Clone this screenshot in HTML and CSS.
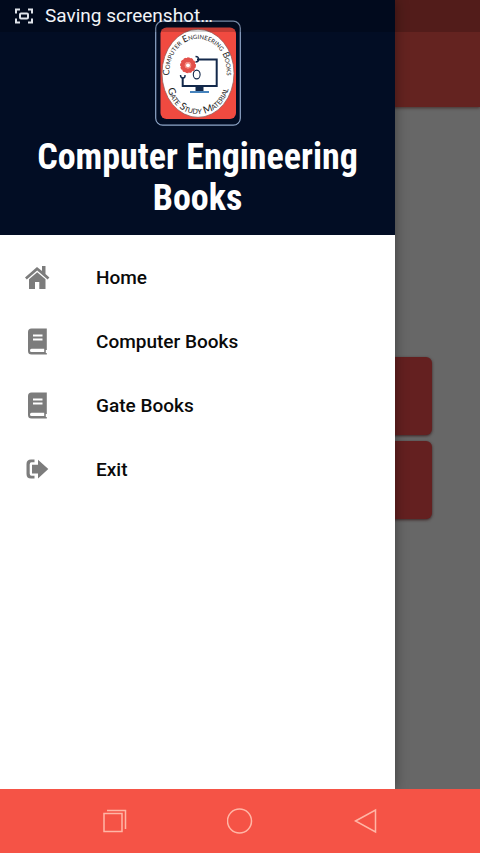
FILE: index.html
```html
<!DOCTYPE html>
<html lang="en">
<head>
<meta charset="utf-8">
<meta name="viewport" content="width=device-width, initial-scale=1">
<title>Computer Engineering Books</title>
<link rel="stylesheet" href="styles.css">
</head>
<body>
<div class="screen">
  <div class="app">
    <div class="toolbar"></div>
    <main class="cards">
      <div class="card"></div>
      <div class="card"></div>
    </main>
  </div>
  <aside class="drawer">
    <header class="drawer-header">
      <svg class="logo" viewBox="0 0 86 106" aria-hidden="true">
        <rect x="0.7" y="1.2" width="84.6" height="104" rx="7" fill="#020d24" stroke="#8fa6c8" stroke-width="1.2"/>
        <rect x="5.500" y="7.500" width="75.500" height="91.500" rx="6" fill="#f04a40"/>
        <ellipse cx="43" cy="53.300" rx="36" ry="44" fill="#fff" stroke="#8c5550" stroke-width="0.7"/>
        <path id="arc-top" d="M15 62C11 36 25 19 43 19S75 36 71 62" fill="none"/>
        <path id="arc-bottom" d="M11 60C13 82 26 94 43 94S73 82 75 60" fill="none"/>
        <text class="logo-top"><textPath href="#arc-top" startOffset="50%">Computer Engineering Books</textPath></text>
        <text class="logo-bottom"><textPath href="#arc-bottom" startOffset="50%">Gate Study Material</textPath></text>
        <path d="M42 39.500H61.700V66H27.700V58" fill="none" stroke="#13294b" stroke-width="2"/>
        <path d="M40.500 36.500Q44 36.500 43.500 39.500Q43.500 42 40.500 42M25.500 55Q25.500 58 28 58Q30.300 58 30 55" fill="none" stroke="#13294b" stroke-width="1.400"/>
        <circle cx="33" cy="45.300" r="5.200" fill="#fff" stroke="#e3504a" stroke-width="4.500"/>
        <circle cx="33" cy="45.300" r="7.300" fill="none" stroke="#e3504a" stroke-width="1.200" stroke-dasharray="2.500 1.200"/>
        <circle cx="33" cy="45.300" r="3.300" fill="#f58b80"/>
        <circle cx="33" cy="45.300" r="1.900" fill="#fff"/>
        <ellipse cx="41.700" cy="54.500" rx="3.400" ry="4.400" fill="#fff" stroke="#13294b" stroke-width="1.100"/>
        <path d="M40.500 67H48.500V71H40.500Z" fill="#13294b"/>
        <path d="M35 72H54" stroke="#4683bd" stroke-width="2"/>
      </svg>
      <h1 class="title">Computer Engineering Books</h1>
    </header>
    <nav class="menu">
      <a class="item" href="#home">
        <svg class="icon" viewBox="0 0 24 24" aria-hidden="true"><path d="M12 1L0 11.500L1.800 13.500L12.200 4.500L22.600 13.500L24.400 11.500L20.500 8V0H17V5Z"/><path d="M12.200 6.200L4 13.300V23H10V16H14.300V23H20.500V13.300Z"/></svg>
        <span>Home</span>
      </a>
      <a class="item" href="#computer-books">
        <svg class="icon" viewBox="0 0 24 24" aria-hidden="true"><path fill-rule="evenodd" d="M6.500 -1.500H21.800V20H20.800V23H21.800V24.500H6.500Q3 24.500 3 21V2Q3 -1.500 6.500 -1.500ZM8 4.500V6.500H17.500V4.500ZM8 8.500V10.500H17.500V8.500ZM6.500 18.800Q5 18.800 5 20.400T6.500 22H19.200V18.800Z"/></svg>
        <span>Computer Books</span>
      </a>
      <a class="item" href="#gate-books">
        <svg class="icon" viewBox="0 0 24 24" aria-hidden="true"><path fill-rule="evenodd" d="M6.500 -1.500H21.800V20H20.800V23H21.800V24.500H6.500Q3 24.500 3 21V2Q3 -1.500 6.500 -1.500ZM8 4.500V6.500H17.500V4.500ZM8 8.500V10.500H17.500V8.500ZM6.500 18.800Q5 18.800 5 20.400T6.500 22H19.200V18.800Z"/></svg>
        <span>Gate Books</span>
      </a>
      <a class="item" href="#exit">
        <svg class="icon" viewBox="0 0 24 24" aria-hidden="true"><path d="M9.500 1.500H6Q1.500 1.500 1.500 6V16Q1.500 20.500 6 20.500H9.500V17.800H6.500Q4.700 17.800 4.700 15.500V6.500Q4.700 4.200 6.500 4.200H9.500Z"/><path d="M13 1.800L23.300 11L13 20.500V15.500H7V6.800H13Z"/></svg>
        <span>Exit</span>
      </a>
    </nav>
  </aside>
  <div class="status">
    <svg class="status-icon" viewBox="0 0 18 16" aria-hidden="true"><path d="M1 5.500V1.500H5M13 1.500H17V5.500M17 10.500V14.500H13M5 14.500H1V10.500" fill="none" stroke="#dfe3ea" stroke-width="2"/><rect x="5" y="5.500" width="8" height="5" rx="1" fill="none" stroke="#dfe3ea" stroke-width="2"/></svg>
    <span>Saving screenshot…</span>
  </div>
</div>
<footer class="navbar">
  <button class="key" type="button" aria-label="Recent apps"><svg viewBox="0 0 26 26"><path d="M3 5.500H21V23.500H3ZM6 2.500H24.500V21"/></svg></button>
  <button class="key" type="button" aria-label="Home screen"><svg viewBox="0 0 26 26"><circle cx="12.500" cy="13" r="12"/></svg></button>
  <button class="key" type="button" aria-label="Back"><svg viewBox="0 0 26 26"><path d="M1.500 13L21.500 2V24Z"/></svg></button>
</footer>
</body>
</html>
```
FILE: styles.css
```css
* {
  box-sizing: border-box;
}

body {
  margin: 0;
  min-height: 100vh;
  display: flex;
  flex-direction: column;
  font-family: Roboto, "Liberation Sans", sans-serif;
  background: #676767;
}

.screen {
  position: relative;
  flex: 1;
  display: flex;
  flex-direction: column;
  overflow: hidden;
}

.app {
  flex: 1;
}

.toolbar {
  height: 107px;
  background: #642320;
  box-shadow: 0 1px 3px #45302e;
}

.cards {
  display: flex;
  flex-direction: column;
  gap: 6px;
  padding: 250px 48px 0;
}

.card {
  height: 78px;
  border-radius: 6px;
  background: #642020;
  box-shadow: 0 1px 3px #3c2424;
}

.drawer {
  position: absolute;
  top: 0;
  bottom: 0;
  left: 0;
  width: calc(100% - 85px);
  background: #fff;
  box-shadow: 0 0 12px rgba(0, 0, 0, 0.4);
}

.drawer-header {
  display: flex;
  flex-direction: column;
  align-items: center;
  gap: 11px;
  padding: 20px 16px 16px;
  background: #020d24;
}

.logo {
  display: block;
  width: 86px;
  height: 106px;
}

.logo text {
  font-family: Lato, sans-serif;
  font-variant: small-caps;
  text-anchor: middle;
  fill: #1c1c1c;
}

.logo-top {
  font-size: 9px;
}

.logo-bottom {
  font-size: 10px;
}

.title {
  margin: 0;
  font-family: "Liberation Sans Narrow", "Roboto Condensed", "Liberation Sans", sans-serif;
  font-size: 36px;
  line-height: 41px;
  font-weight: 700;
  text-align: center;
  color: #fff;
}

.menu {
  padding: 11px 0;
}

.item {
  display: flex;
  align-items: center;
  gap: 47px;
  height: 64px;
  padding: 0 25px;
  font-size: 19px;
  line-height: 24px;
  font-weight: 500;
  color: #0a0a0a;
  text-decoration: none;
}

.icon {
  width: 24px;
  height: 24px;
  overflow: visible;
  fill: #7c7c7c;
}

.status {
  position: absolute;
  top: 0;
  left: 0;
  right: 0;
  display: flex;
  align-items: center;
  gap: 12px;
  height: 32px;
  padding: 0 15px;
  font-size: 19px;
  line-height: 24px;
  color: #f2f4f8;
  background: rgba(0, 0, 0, 0.18);
}

.status-icon {
  width: 18px;
  height: 16px;
}

.navbar {
  display: flex;
  justify-content: space-evenly;
  align-items: center;
  height: 64px;
  background: #f55346;
}

.key {
  display: block;
  width: 26px;
  height: 26px;
  padding: 0;
  border: 0;
  background: none;
}

.key svg {
  display: block;
  width: 26px;
  height: 26px;
  fill: none;
  stroke: #ffb6a6;
  stroke-width: 1.5;
}
```
